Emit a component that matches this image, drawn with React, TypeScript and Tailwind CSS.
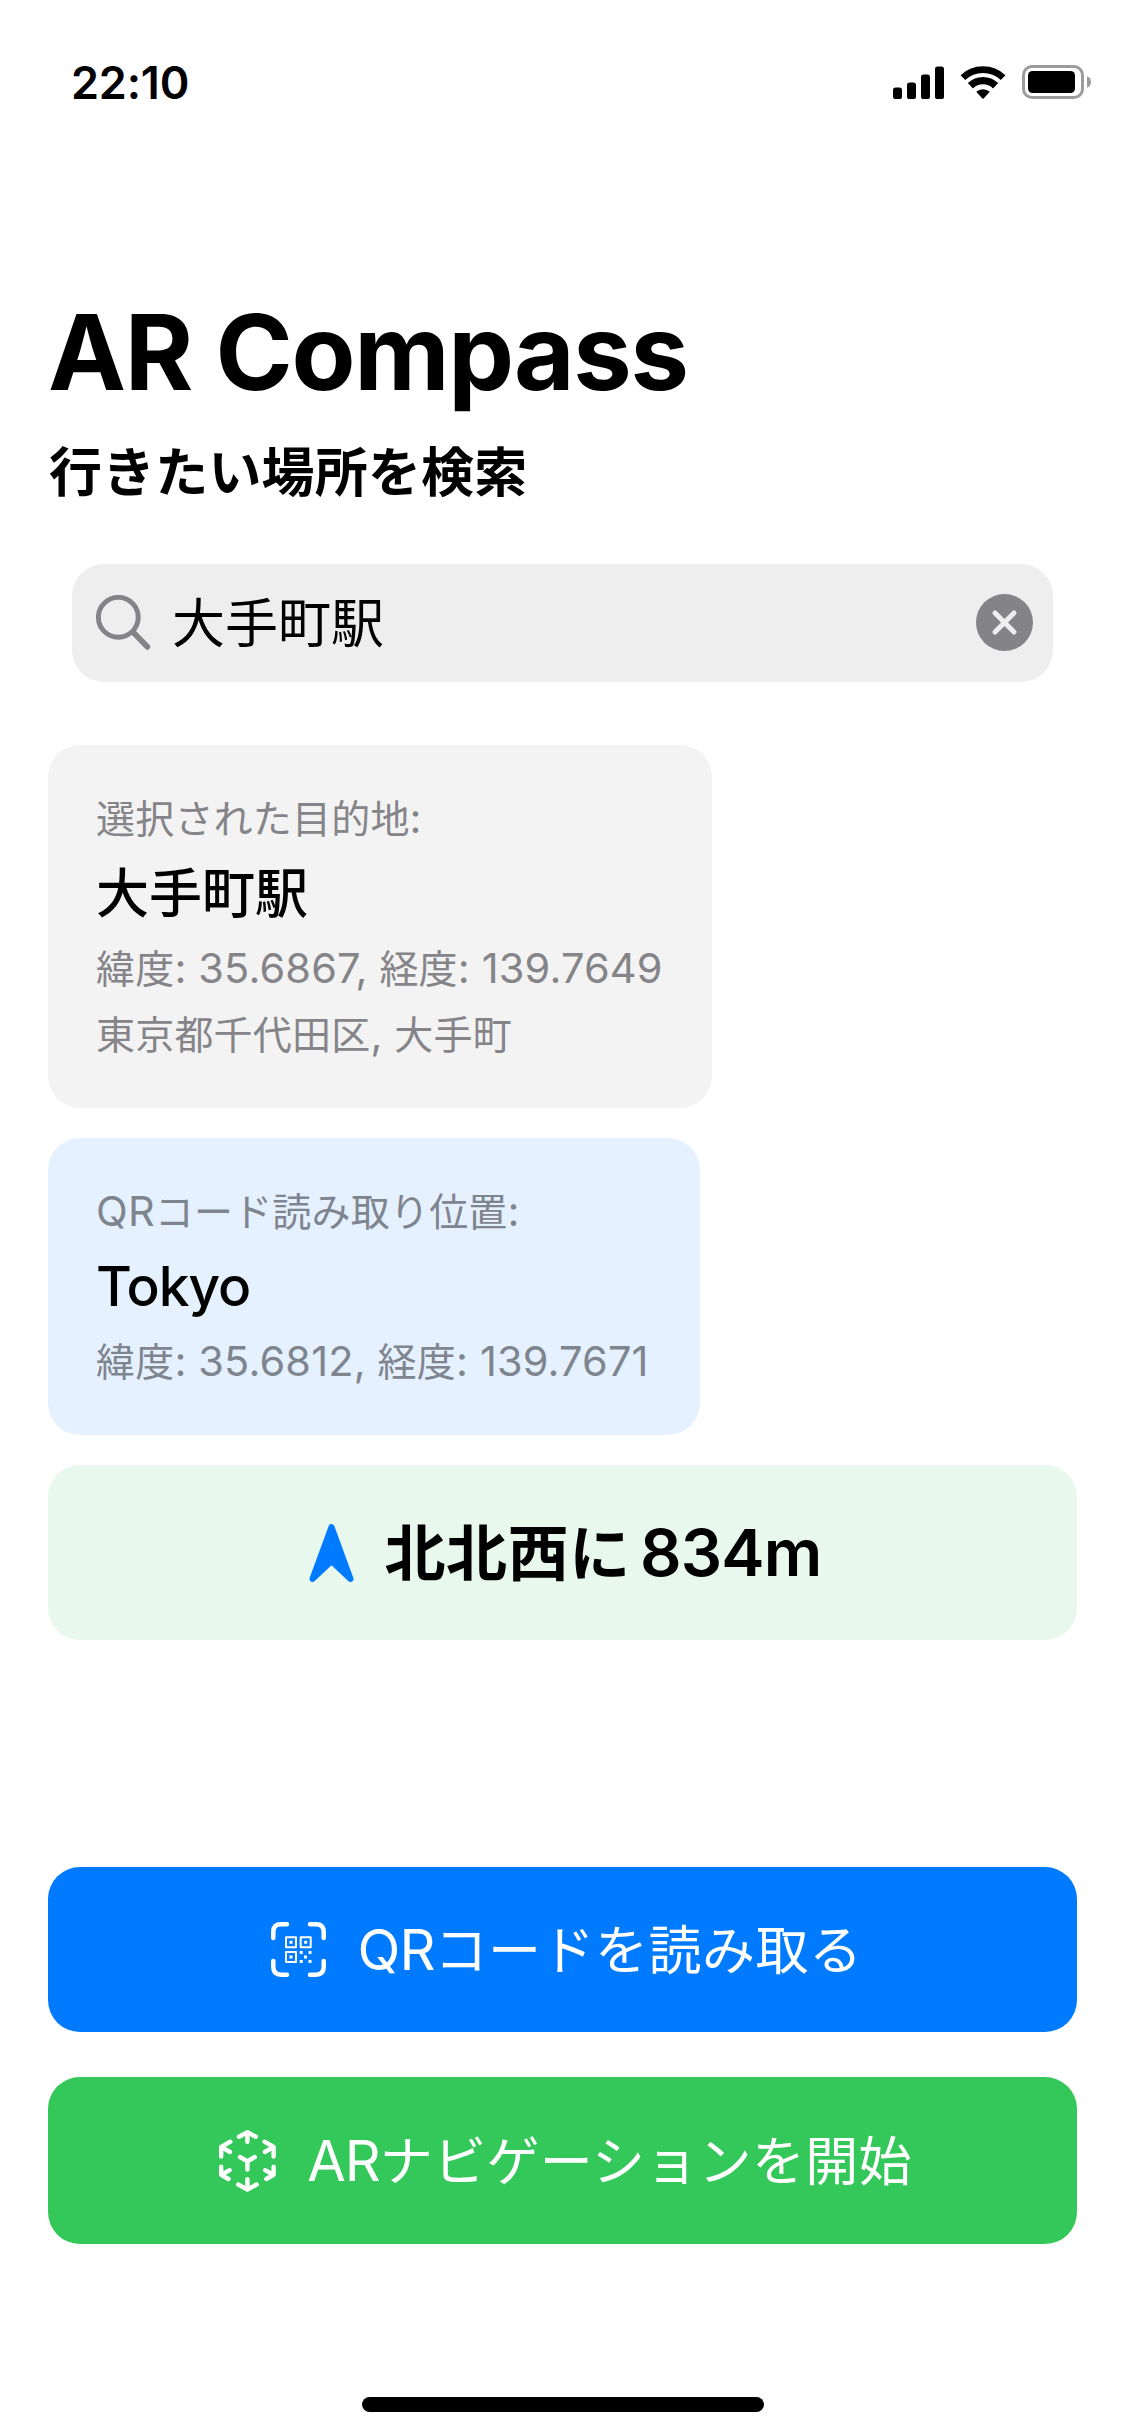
import type { ReactNode } from "react"

const SignalIcon = () => (
  <svg width="51" height="33" viewBox="0 0 51 33" fill="currentColor">
    <rect x="0" y="21.5" width="9" height="11.5" rx="2.6" />
    <rect x="14" y="16.5" width="9" height="16.5" rx="2.6" />
    <rect x="28" y="8.5" width="9" height="24.5" rx="2.6" />
    <rect x="42" y="0.5" width="9" height="32.5" rx="2.6" />
  </svg>
)

const WifiIcon = () => (
  <svg width="46" height="33" viewBox="0 0 46 33" fill="none" stroke="currentColor">
    <path d="M2.9 11.6A29.3 29.3 0 0 1 43.1 11.6" strokeWidth="6.8" />
    <path d="M10.4 19.7A18.3 18.3 0 0 1 35.6 19.7" strokeWidth="7.4" />
    <path d="M16.2 25.8A10.4 10.4 0 0 1 29.8 25.8L23.6 32.4Q23 33 22.4 32.4Z" fill="currentColor" stroke="none" />
  </svg>
)

const BatteryIcon = () => (
  <svg width="70" height="34" viewBox="0 0 70 34">
    <rect x="1.5" y="1.5" width="59" height="31" rx="8.5" fill="none" stroke="#9c9c9c" strokeWidth="3" />
    <rect x="6" y="6" width="47" height="22" rx="4.5" fill="#000" />
    <path d="M65 11.2C67.8 12.3 69 14.5 69 17S67.8 21.7 65 22.8Z" fill="#9c9c9c" />
  </svg>
)

const SearchIcon = () => (
  <svg width="55" height="55" viewBox="0 0 55 55" fill="none" stroke="#848388">
    <circle cx="22.3" cy="22.3" r="19.9" strokeWidth="4.9" />
    <path d="M37 37L51.3 51.8" strokeWidth="5.8" strokeLinecap="round" />
  </svg>
)

const ClearIcon = () => (
  <svg width="57" height="57" viewBox="0 0 57 57">
    <circle cx="28.5" cy="28.5" r="28.5" fill="#848388" />
    <path d="M19 19L38 38M38 19L19 38" stroke="#eeeeee" strokeWidth="5" strokeLinecap="round" />
  </svg>
)

const HeadingIcon = () => (
  <svg width="45" height="58" viewBox="0 0 45 58">
    <path
      d="M22.5 3.2L41.4 54.8L22.5 37L3.6 54.8Z"
      fill="#007aff"
      stroke="#007aff"
      strokeWidth="6.2"
      strokeLinejoin="round"
    />
  </svg>
)

const QrScanIcon = () => (
  <svg width="55" height="55" viewBox="0 0 55 55" fill="none" stroke="currentColor">
    <path
      d="M2.3 16V10Q2.3 2.3 10 2.3H16M39 2.3H45Q52.7 2.3 52.7 10V16M52.7 39V45Q52.7 52.7 45 52.7H39M16 52.7H10Q2.3 52.7 2.3 45V39"
      strokeWidth="4.5"
      strokeLinecap="round"
    />
    <path d="M15 15.3H25V25.3H15ZM29.7 15.3H39.7V25.3H29.7ZM15 30H25V40H15Z" strokeWidth="2" strokeLinejoin="round" />
    <path
      d="M18.5 18.8h3v3h-3zM33.2 18.8h3v3h-3zM18.5 33.5h3v3h-3zM28.7 29h3v3h-3zM37.5 29h3v3h-3zM33 33.5h3v3h-3zM28.7 38h3v3h-3zM37.5 38h3v3h-3z"
      fill="currentColor"
      stroke="none"
    />
  </svg>
)

const ArCubeIcon = () => (
  <svg
    width="57"
    height="62"
    viewBox="0 0 57 62"
    fill="none"
    stroke="currentColor"
    strokeWidth="4.4"
    strokeLinecap="round"
    strokeLinejoin="round"
  >
    <path d="M20 6.8L28.4 2.3L36.8 6.8M28.4 3V11.8" />
    <path d="M11.3 11.7L2.2 17V26.5M3 17.3L11 22" />
    <path d="M45.5 11.7L54.6 17V26.5M53.8 17.3L45.8 22" />
    <path d="M21 27L28.4 31.4L35.8 27M28.4 31.4V39.5" />
    <path d="M2.2 36.8V44.8L9.5 49M3 44.5L10.7 40.2" />
    <path d="M54.6 36.8V44.8L47.3 49M53.8 44.5L46.1 40.2" />
    <path d="M19.2 54.5L28.4 59.7L37.6 54.5M28.4 59V49.3" />
  </svg>
)

// Latin runs sit slightly larger than the surrounding Japanese text
const Latin = ({ children }: { children: ReactNode }) => (
  <span className="text-[41.5px] tracking-[0.15px]">{children}</span>
)

const Caption = ({ children }: { children: ReactNode }) => (
  <p className="h-[66px] text-[39px] leading-[66px] tracking-[0.2px] whitespace-pre">{children}</p>
)

export default function App() {
  return (
    <div className="flex h-[2436px] w-[1125px] flex-col overflow-hidden bg-white font-['Inter','Noto_Sans_CJK_JP',sans-serif] text-black">
      {/* Status bar */}
      <header className="flex h-[164px] shrink-0 items-center justify-between pr-[33px] pl-[71px]">
        <span className="text-[45px] leading-none font-semibold tracking-[-0.2px]">22:10</span>
        <div className="flex items-center">
          <SignalIcon />
          <span className="ml-[16px]">
            <WifiIcon />
          </span>
          <span className="ml-[16px]">
            <BatteryIcon />
          </span>
        </div>
      </header>

      <main className="flex flex-1 flex-col px-12">
        <h1 className="mt-[128px] h-[120px] text-[104.5px] leading-[120px] font-bold tracking-[-1.3px]">AR Compass</h1>
        <h2 className="mt-[26px] h-[70px] pl-px text-[53px] leading-[70px] font-semibold tracking-[0.15px]">
          行きたい場所を検索
        </h2>

        {/* Search field */}
        <div className="mx-6 mt-[56px] flex h-[118px] items-center rounded-[32px] bg-[#eeeeee] pr-[20px] pb-px pl-6">
          <SearchIcon />
          <span className="ml-[21px] flex-1 pt-[3px] text-[53px] leading-[70px]">大手町駅</span>
          <ClearIcon />
        </div>

        {/* Destination */}
        <section className="mt-[63px] flex h-[363px] w-[664px] flex-col rounded-[32px] bg-[#f3f3f3] px-12 pt-[40px] text-[#858489]">
          <Caption>
            選択された目的地<Latin>:</Latin>
          </Caption>
          <p className="h-[84px] text-[53px] leading-[87px] font-medium text-black">大手町駅</p>
          <Caption>
            緯度<Latin>: 35.6867, </Latin>経度<Latin>: 139.7649</Latin>
          </Caption>
          <Caption>
            東京都千代田区<Latin>, </Latin>大手町
          </Caption>
        </section>

        {/* Scanned position */}
        <section className="mt-[30px] flex h-[297px] w-[652px] flex-col rounded-[32px] bg-[#e5f1ff] px-12 pt-[40px] text-[#7f858f]">
          <Caption>
            <Latin>QR</Latin>コード読み取り位置<Latin>:</Latin>
          </Caption>
          <p className="h-[84px] text-[55px] leading-[84px] font-medium tracking-[-1.1px] text-black">Tokyo</p>
          <Caption>
            緯度<Latin>: 35.6812, </Latin>経度<Latin>: 139.7671</Latin>
          </Caption>
        </section>

        {/* Direction and distance */}
        <section className="mt-[30px] flex h-[175px] items-center justify-center rounded-[32px] bg-[#e8f8ed] pt-px pl-[5px]">
          <HeadingIcon />
          <p className="ml-[31px] h-[90px] text-[61px] leading-[90px] font-semibold tracking-[0.6px] whitespace-nowrap">
            北北西に<span className="ml-[9px] text-[65px] tracking-[-0.8px]">834m</span>
          </p>
        </section>

        {/* Actions */}
        <button className="mt-[227px] flex h-[165px] items-center justify-center rounded-[32px] bg-[#007aff] pl-[8px] text-white">
          <QrScanIcon />
          <span className="ml-[32px] h-[80px] text-[53px] leading-[80px] tracking-[0.5px] whitespace-nowrap">
            <span className="text-[56px] tracking-[-1px]">QR</span>コードを読み取る
          </span>
        </button>
        <button className="mt-[45px] flex h-[167px] items-center justify-center rounded-[32px] bg-[#34c759] pl-[6px] text-white">
          <ArCubeIcon />
          <span className="ml-[31px] h-[80px] text-[53px] leading-[80px] tracking-[0.3px] whitespace-nowrap">
            <span className="text-[56px] tracking-[-1px]">AR</span>ナビゲーションを開始
          </span>
        </button>
      </main>

      {/* Home indicator */}
      <div className="mb-[24px] h-[15px] w-[402px] shrink-0 self-center rounded-full bg-black" />
    </div>
  )
}
